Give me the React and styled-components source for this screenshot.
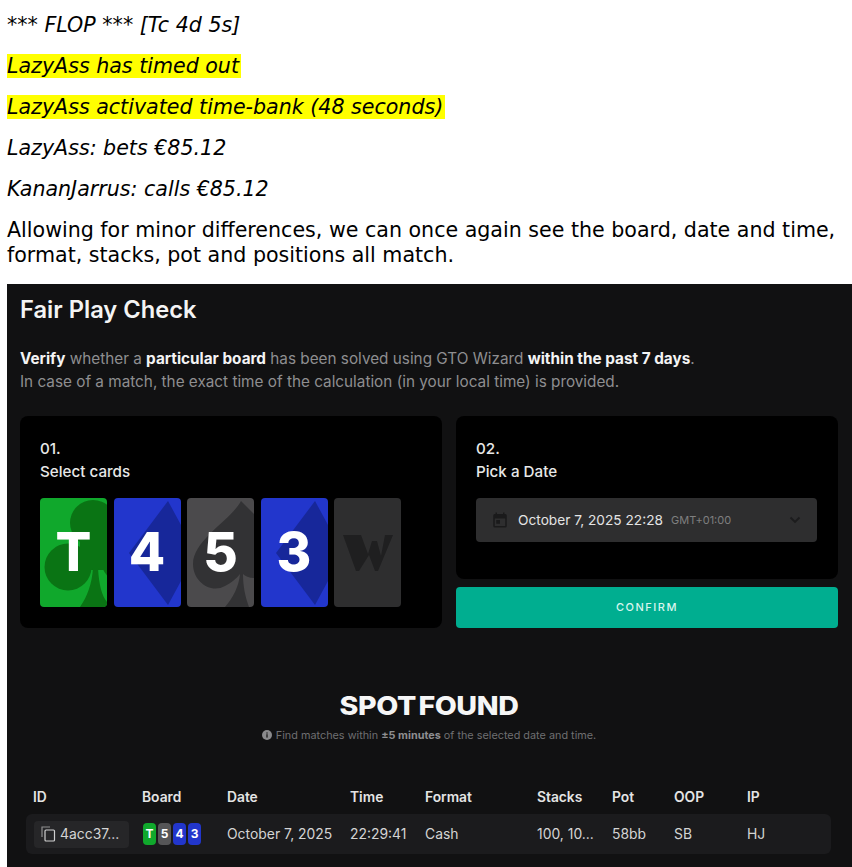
import React from 'react';
import styled, { createGlobalStyle } from 'styled-components';

const GlobalStyle = createGlobalStyle`
html, body { margin: 0; background: #fff; }
body { padding: 0 0 0 7px; height: 867px; overflow: hidden; font-family: "DejaVu Sans", sans-serif; }
`;

const Article = styled.div`
  padding-top: 13px;
  color: #000;
  font-size: 20.6px;
  line-height: 25px;
`;

const Line = styled.p`
  margin: 0 0 16px;
  font-style: italic;
`;

const Mark = styled.span`
  background: #ffff00;
  padding-right: 2px;
`;

const Para = styled.p`
  margin: 0 0 16px;
  width: 845px;
`;

const Shot = styled.div`
  width: 845px;
  height: 583px;
  overflow: hidden;
  background: #111112;
  color: #fff;
  font-family: Inter, sans-serif;
  padding: 11px 14px 0 13px;
  box-sizing: border-box;
`;

const Title = styled.h1`
  margin: 0;
  font-size: 23.7px;
  line-height: 30px;
  font-weight: 600;
  color: #f4f4f4;
`;

const Intro = styled.div`
  margin-top: 22px;
  font-size: 15.3px;
  line-height: 23px;
  color: #8e8e90;
  b { color: #f4f4f4; font-weight: 700; }
`;

const Columns = styled.div`
  margin-top: 23px;
  display: grid;
  grid-template-columns: 422px 382px;
  column-gap: 14px;
  align-items: start;
`;

const Panel = styled.section`
  background: #000;
  border-radius: 8px;
  padding: 21px 20px 0;
  height: ${p => p.$h}px;
  box-sizing: border-box;
  font-size: 15.2px;
  font-weight: 500;
  line-height: 23px;
  color: #e8e8e8;
`;

const Stack = styled.div`
  display: flex;
  flex-direction: column;
  gap: 8px;
`;

const Cards = styled.div`
  margin-top: 15px;
  display: flex;
  gap: 6.5px;
`;

const CardBox = styled.div`
  position: relative;
  width: 67px;
  height: 109px;
  border-radius: 4px;
  overflow: hidden;
  background: ${p => p.$bg};
  display: flex;
  align-items: center;
  justify-content: center;
  color: #fff;
  font-size: 53px;
  font-weight: 800;
  font-family: Inter, sans-serif;
  span { position: relative; }
  svg { position: absolute; inset: 0; }
`;

const Select = styled.div`
  margin-top: 15px;
  width: 341px;
  height: 44px;
  border-radius: 4px;
  background: #2e2e2f;
  display: flex;
  align-items: center;
  padding: 0 16px 0 15px;
  box-sizing: border-box;
  font-size: 13.7px;
  font-weight: 400;
  color: #e4e4e4;
  svg { flex: none; }
`;

const DateText = styled.span`
  margin-left: 9px;
`;

const Zone = styled.span`
  margin-left: 8px;
  font-size: 11px;
  color: #7f7f7f;
`;

const Chevron = styled.svg`
  margin-left: auto;
`;

const Confirm = styled.button`
  height: 41px;
  padding: 0 0 2px;
  border: 0;
  border-radius: 4px;
  background: #00ae90;
  color: #d9f5ee;
  font-family: Inter, sans-serif;
  font-size: 11px;
  font-weight: 500;
  letter-spacing: 1.5px;
`;

const Found = styled.h2`
  margin: 62px 0 0;
  text-align: center;
  font-size: 26px;
  line-height: 32px;
  font-weight: 800;
  color: #f6f6f6;
  letter-spacing: -0.4px;
  word-spacing: -3px;
  transform: scaleX(1.1);
`;

const Hint = styled.div`
  margin-top: 4px;
  display: flex;
  justify-content: center;
  align-items: center;
  gap: 4px;
  font-size: 10.85px;
  line-height: 18px;
  color: #6f6f71;
  b { color: #8e8e90; font-weight: 700; }
`;

const Head = styled.div`
  margin: 44px 7px 0 6px;
  padding: 0 7px;
  display: grid;
  grid-template-columns: 109px 85px 123px 75px 112px 75px 62px 73px 1fr;
  font-size: 13.8px;
  line-height: 18px;
  font-weight: 600;
  color: #e4e4e4;
`;

const Row = styled(Head)`
  margin-top: 8px;
  height: 40px;
  align-items: center;
  background: #1b1b1d;
  border-radius: 6px;
  font-weight: 400;
  font-size: 13.9px;
  color: #d4d4d4;
`;

const IdChip = styled.div`
  width: 95px;
  margin-left: 1px;
  height: 27px;
  box-sizing: border-box;
  padding-left: 7px;
  display: flex;
  align-items: center;
  gap: 4px;
  border-radius: 4px;
  background: #262628;
`;

const Mini = styled.div`
  display: flex;
  gap: 2px;
  margin-left: 1px;
`;

const MiniCard = styled.span`
  width: 13px;
  height: 22px;
  border-radius: 4px;
  background: ${p => p.$bg};
  display: flex;
  align-items: center;
  justify-content: center;
  font-size: 12px;
  font-weight: 700;
  color: #fff;
`;

const Club = () => (
  <svg width="67" height="109" viewBox="0 0 67 109" fill="#0a7414">
    <circle cx="53" cy="25" r="23" />
    <circle cx="28" cy="69" r="23.5" />
    <circle cx="84" cy="62" r="23" />
    <rect x="40" y="30" width="27" height="42" />
    <path d="M53 70 C52 86 47 99 40 109 L67 109 L67 104 C62 98 59 88 58 70 Z" />
  </svg>
);

const Diamond = () => (
  <svg width="67" height="109" viewBox="0 0 67 109" fill="#17279a">
    <path d="M54 3 L67 27 L67 83 L54 107 L15 55 Z" />
  </svg>
);

const Spade = () => (
  <svg width="67" height="109" viewBox="0 0 67 109" fill="#323234">
    <path d="M54 3 C44 22 6 42 6 66 C6 84 24 96 38 88 C44 85 50 80 53 76 C52 88 46 100 38 109 L62 109 C58 98 56 88 56 76 C58 78 62 80 67 80 L67 16 Z" />
  </svg>
);

const Logo = () => (
  <svg width="67" height="109" viewBox="0 0 67 109" fill="#1f1f20">
    <path d="M9 37 H27 L34 56 L38 43 L43 43 L47 58 L51 37 H59 L44 73 H41 L35 57 L25 73 H22 Z" />
  </svg>
);

const Calendar = () => (
  <svg width="18" height="18" viewBox="0 0 24 24" fill="#1a1a1b">
    <path d="M19 4h-1V2h-2v2H8V2H6v2H5a2 2 0 0 0-2 2v14a2 2 0 0 0 2 2h14a2 2 0 0 0 2-2V6a2 2 0 0 0-2-2zm0 16H5V10h14v10zM7 12h5v5H7z" />
  </svg>
);

const Down = () => (
  <Chevron width="12" height="8" viewBox="0 0 12 8" fill="none" stroke="#1c1c1d" strokeWidth="1.8">
    <path d="M1.5 1.5 L6 6 L10.5 1.5" />
  </Chevron>
);

const Info = () => (
  <svg width="10" height="10" viewBox="0 0 10 10">
    <circle cx="5" cy="5" r="5" fill="#8a8a8c" />
    <rect x="4.4" y="4.2" width="1.2" height="3.4" fill="#111112" />
    <rect x="4.4" y="2.4" width="1.2" height="1.2" fill="#111112" />
  </svg>
);

const CopyIcon = () => (
  <svg width="15" height="16" viewBox="0 0 15 16" fill="none" stroke="#d0d0d0" strokeWidth="1.2">
    <path d="M1 11 V1 H9" stroke="#8f8f90" />
    <rect x="4" y="4" width="9.5" height="11" rx="1" />
  </svg>
);

const board = [
  { v: 'T', bg: '#10a82c', Art: Club },
  { v: '4', bg: '#2236cc', Art: Diamond },
  { v: '5', bg: '#4b4a4c', Art: Spade },
  { v: '3', bg: '#2236cc', Art: Diamond },
];

const mini = [
  ['T', '#10a82c'],
  ['5', '#555557'],
  ['4', '#2236cc'],
  ['3', '#2236cc'],
];

export default function App() {
  return (
    <>
      <GlobalStyle />
      <Article>
        <Line>*** FLOP *** [Tc 4d 5s]</Line>
        <Line><Mark>LazyAss has timed out</Mark></Line>
        <Line><Mark>LazyAss activated time-bank (48 seconds)</Mark></Line>
        <Line>LazyAss: bets €85.12</Line>
        <Line>KananJarrus: calls €85.12</Line>
        <Para>Allowing for minor differences, we can once again see the board, date and time, format, stacks, pot and positions all match.</Para>
      </Article>
      <Shot>
        <Title>Fair Play Check</Title>
        <Intro>
          <div><b>Verify</b> whether a <b>particular board</b> has been solved using GTO Wizard <b>within the past 7 days</b>.</div>
          <div>In case of a match, the exact time of the calculation (in your local time) is provided.</div>
        </Intro>
        <Columns>
          <Panel $h={212}>
            <div>01.</div>
            <div>Select cards</div>
            <Cards>
              {board.map(({ v, bg, Art }, i) => (
                <CardBox key={i} $bg={bg}>
                  <Art />
                  <span>{v}</span>
                </CardBox>
              ))}
              <CardBox $bg="#2e2e2f"><Logo /></CardBox>
            </Cards>
          </Panel>
          <Stack>
            <Panel $h={163}>
              <div>02.</div>
              <div>Pick a Date</div>
              <Select>
                <Calendar />
                <DateText>October 7, 2025 22:28</DateText>
                <Zone>GMT+01:00</Zone>
                <Down />
              </Select>
            </Panel>
            <Confirm>CONFIRM</Confirm>
          </Stack>
        </Columns>
        <Found>SPOT FOUND</Found>
        <Hint>
          <Info />
          <span>Find matches within <b>±5 minutes</b> of the selected date and time.</span>
        </Hint>
        <Head>
          <div>ID</div><div>Board</div><div>Date</div><div>Time</div><div>Format</div>
          <div>Stacks</div><div>Pot</div><div>OOP</div><div>IP</div>
        </Head>
        <Row>
          <IdChip><CopyIcon /><span>4acc37...</span></IdChip>
          <Mini>
            {mini.map(([v, bg]) => <MiniCard key={v} $bg={bg}>{v}</MiniCard>)}
          </Mini>
          <div>October 7, 2025</div>
          <div>22:29:41</div>
          <div>Cash</div>
          <div>100, 10...</div>
          <div>58bb</div>
          <div>SB</div>
          <div>HJ</div>
        </Row>
      </Shot>
    </>
  );
}
